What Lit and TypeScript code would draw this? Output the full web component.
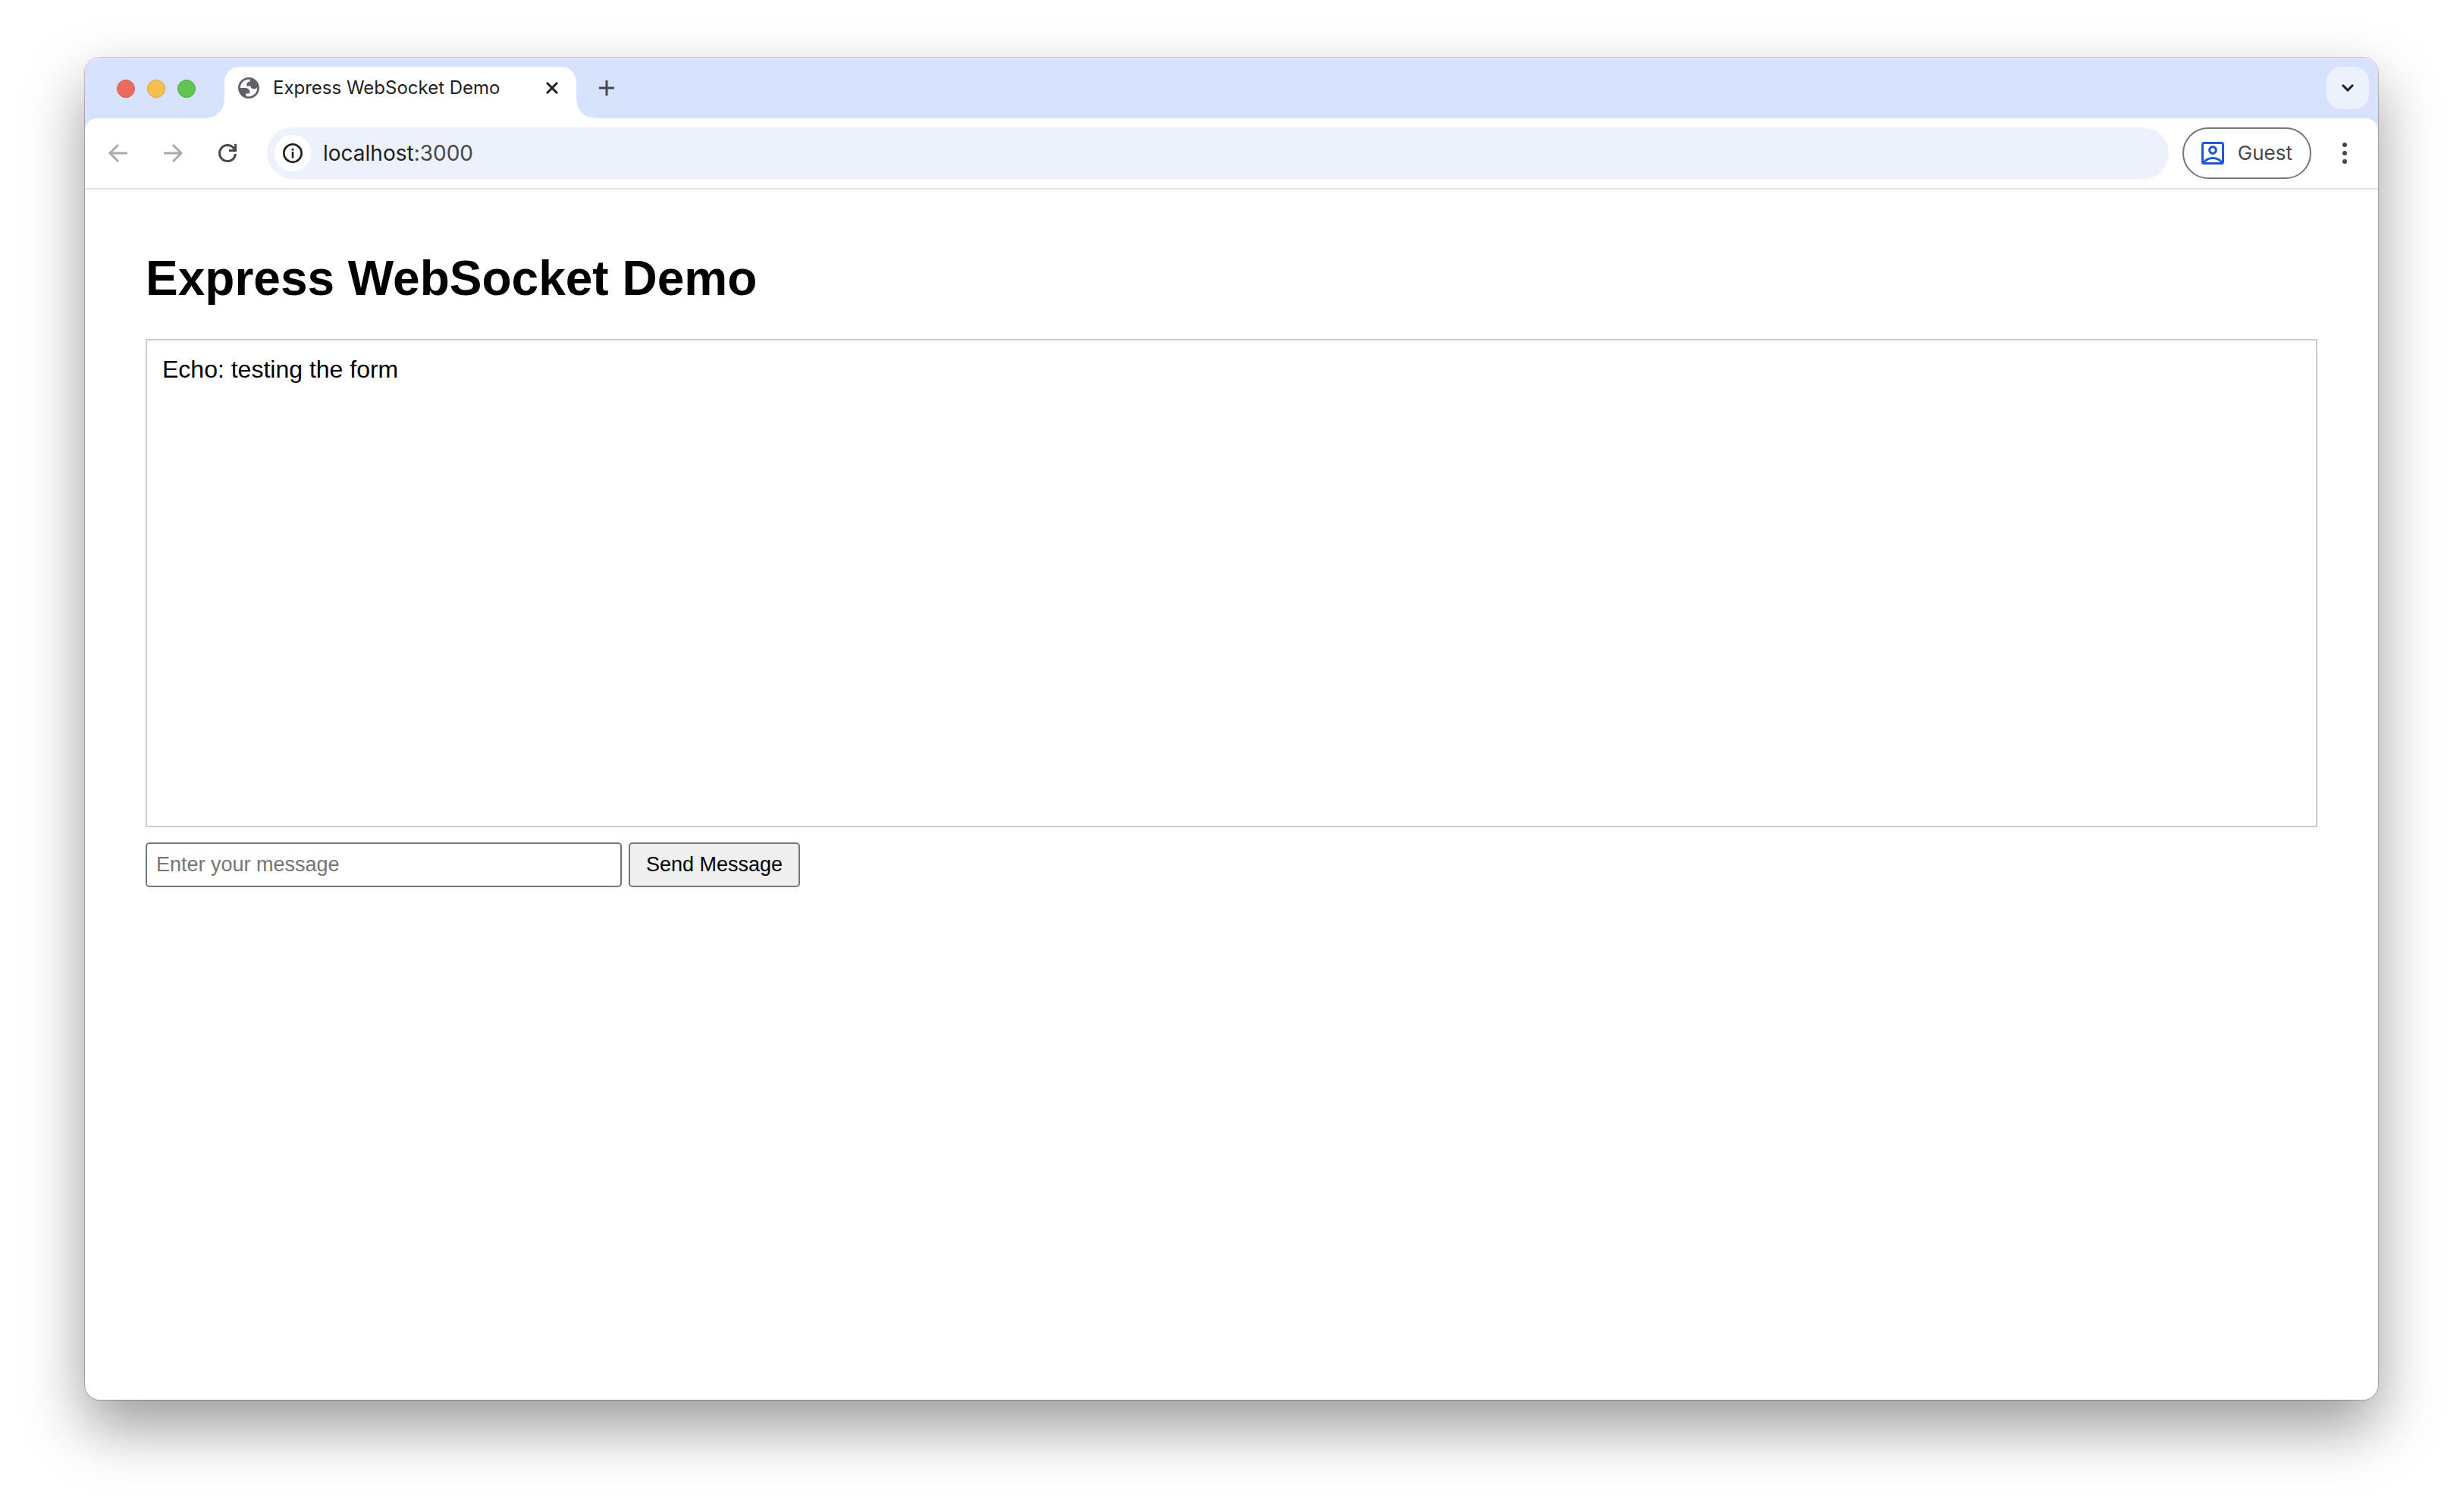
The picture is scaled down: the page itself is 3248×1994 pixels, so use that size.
import { LitElement, html, css } from "lit";
import { customElement, state } from "lit/decorators.js";

@customElement("browser-tab-strip")
class BrowserTabStrip extends LitElement {
  static styles = css`
    :host {
      display: block;
      background: #d6e1fb;
      font-family: Inter, "Liberation Sans", sans-serif;
    }
    .strip {
      display: flex;
      align-items: flex-start;
      height: 80px;
      padding: 12px 12px 0 42px;
      box-sizing: border-box;
      border-radius: 20px 20px 0 0;
      box-shadow: inset 0 1px 0 rgba(255, 255, 255, 0.6);
    }
    button {
      border: 0;
      padding: 0;
      background: none;
      display: grid;
      place-items: center;
      color: #474747;
    }
    .lights {
      display: flex;
      gap: 16px;
      padding-top: 17px;
      margin-right: 38px;
    }
    .light {
      width: 24px;
      height: 24px;
      border-radius: 50%;
      border: 1px solid;
      box-sizing: border-box;
    }
    .close {
      background: #ec6a5e;
      border-color: #d5554b;
    }
    .minimize {
      background: #f4bf4f;
      border-color: #d8a440;
    }
    .zoom {
      background: #61c554;
      border-color: #52a943;
    }
    .tab {
      display: flex;
      align-items: center;
      width: 464px;
      height: 56px;
      padding: 0 20px 0 18px;
      box-sizing: border-box;
      position: relative;
      background: #fff;
      border-radius: 20px 20px 0 0;
      color: #1f1f1f;
      font-size: 24px;
      line-height: 32px;
      margin-right: 28px;
    }
    .tab::before,
    .tab::after {
      content: "";
      position: absolute;
      top: 44px;
      width: 24px;
      height: 24px;
    }
    .tab::before {
      right: 100%;
      background: radial-gradient(circle at 0 0, transparent 23px, #fff 24px);
    }
    .tab::after {
      left: 100%;
      background: radial-gradient(circle at 100% 0, transparent 23px, #fff 24px);
    }
    .base {
      position: absolute;
      left: 0;
      right: 0;
      top: 50px;
      height: 18px;
      background: #fff;
    }
    .title {
      flex: 1;
      margin-left: 18px;
      white-space: nowrap;
    }
    .tab button {
      width: 24px;
      height: 24px;
      color: #1f1f1f;
    }
    .new {
      width: 24px;
      height: 56px;
    }
    .search {
      margin-left: auto;
      width: 56px;
      height: 56px;
      border-radius: 20px;
      background: #ebf2fc;
      color: #1f1f1f;
    }
    svg {
      display: block;
    }
  `;

  render() {
    return html`
      <div class="strip">
        <div class="lights">
          <button class="light close" aria-label="Close window"></button>
          <button class="light minimize" aria-label="Minimize window"></button>
          <button class="light zoom" aria-label="Zoom window"></button>
        </div>
        <div class="tab">
          <span class="base"></span>
          <svg width="28" height="28" viewBox="2 2 20 20" fill="#5f6368">
            <path
              fill-rule="evenodd"
              d="M12 2C6.480 2 2 6.480 2 12s4.480 10 10 10 10-4.480 10-10S17.520 2 12 2zM4 12h4.400c3.407.022 4.922 1.730 4.543 5.127H9.488v2.470a8.004 8.004 0 0 0 10.498-8.083C19.327 12.504 18.332 13 17 13c-2.137 0-3.206-.916-3.206-2.750h-3.748c-.274-2.728.683-4.092 2.870-4.092 0-.975.327-1.597.811-1.970A8.004 8.004 0 0 0 4 12z"
            />
          </svg>
          <span class="title">Express WebSocket Demo</span>
          <button aria-label="Close tab">
            <svg width="16" height="16" viewBox="0 0 16 16" fill="none" stroke="currentColor" stroke-width="3">
              <path d="M1 1l14 14M15 1L1 15" />
            </svg>
          </button>
        </div>
        <button class="new" aria-label="New tab">
          <svg width="20" height="20" viewBox="0 0 20 20" fill="none" stroke="currentColor" stroke-width="3">
            <path d="M10 0v20M0 10h20" />
          </svg>
        </button>
        <button class="search" aria-label="Search tabs">
          <svg width="16" height="10" viewBox="0 0 16 10" fill="none" stroke="currentColor" stroke-width="3">
            <path d="M1 1l7 7 7-7" />
          </svg>
        </button>
      </div>
    `;
  }
}

@customElement("browser-toolbar")
class BrowserToolbar extends LitElement {
  static styles = css`
    :host {
      display: block;
      background: #d6e1fb;
      font-family: Inter, "Liberation Sans", sans-serif;
    }
    .bar {
      display: flex;
      align-items: center;
      height: 94px;
      padding: 0 30px;
      box-sizing: border-box;
      background: #fff;
      border-bottom: 2px solid #e1e3e1;
      border-radius: 16px 16px 0 0;
    }
    button {
      border: 0;
      padding: 0;
      background: none;
      display: grid;
      place-items: center;
      font: inherit;
      color: #474747;
    }
    svg {
      display: block;
    }
    .nav {
      display: flex;
      gap: 44px;
      margin-right: 38px;
    }
    .nav button {
      width: 28px;
      height: 28px;
    }
    .nav button:disabled {
      color: #ababab;
    }
    .address {
      flex: 1;
      display: flex;
      align-items: center;
      gap: 16px;
      height: 68px;
      padding: 0 10px;
      box-sizing: border-box;
      border-radius: 34px;
      background: #edf2fa;
    }
    .info {
      width: 48px;
      height: 48px;
      border-radius: 50%;
      background: #fff;
      color: #1f1f1f;
    }
    .url {
      font-size: 28px;
      line-height: 36px;
      color: #474747;
      text-decoration: none;
    }
    .host {
      color: #1f1f1f;
    }
    .guest {
      display: flex;
      align-items: center;
      gap: 18px;
      height: 68px;
      padding: 0 23px;
      margin: 0 30px 0 18px;
      border: 2px solid #747775;
      border-radius: 34px;
      font-size: 26px;
      line-height: 32px;
      box-sizing: border-box;
    }
    .menu {
      width: 28px;
      height: 28px;
    }
  `;

  render() {
    return html`
      <div class="bar">
        <div class="nav">
          <button disabled aria-label="Back">
            <svg width="28" height="28" viewBox="0 0 28 28" fill="none" stroke="currentColor" stroke-width="3">
              <path d="M26 14H4M14 3L3 14l11 11" />
            </svg>
          </button>
          <button disabled aria-label="Forward">
            <svg width="28" height="28" viewBox="0 0 28 28" fill="none" stroke="currentColor" stroke-width="3">
              <path d="M2 14h22M14 3l11 11-11 11" />
            </svg>
          </button>
          <button aria-label="Reload">
            <svg width="28" height="28" viewBox="0 0 28 28" fill="none" stroke="currentColor" stroke-width="3">
              <path d="M24.500 15A10.500 10.500 0 1 1 22 7.200L24 9.500M24.500 2v8.500H16" />
            </svg>
          </button>
        </div>
        <div class="address">
          <button class="info" aria-label="View site information">
            <svg width="28" height="28" viewBox="0 0 28 28" fill="none" stroke="currentColor">
              <circle cx="14" cy="14" r="11.700" stroke-width="2.600" />
              <path d="M14 12v8.500M14 7.800v2.600" stroke-width="2.600" />
            </svg>
          </button>
          <a class="url" href="http://localhost:3000"><span class="host">localhost</span>:3000</a>
        </div>
        <button class="guest">
          <svg width="30" height="30" viewBox="0 0 30 30" fill="none" stroke="#2557cf" stroke-width="3">
            <rect x="1.500" y="1.500" width="27" height="27" rx="2" />
            <circle cx="15" cy="11" r="4.300" stroke-width="3.200" />
            <path d="M3 27c3-3.600 7-5.500 12-5.500s9 1.900 12 5.500" />
          </svg>
          <span>Guest</span>
        </button>
        <button class="menu" aria-label="Menu">
          <svg width="28" height="28" viewBox="0 0 28 28" fill="currentColor">
            <circle cx="14" cy="3" r="3" />
            <circle cx="14" cy="14" r="3" />
            <circle cx="14" cy="25" r="3" />
          </svg>
        </button>
      </div>
    `;
  }
}

@customElement("socket-demo")
class SocketDemo extends LitElement {
  static styles = css`
    :host {
      display: block;
      padding: 80px;
      color: #000;
      font-family: Arial, "Liberation Sans", sans-serif;
      font-size: 32px;
      line-height: 36px;
    }
    .heading {
      margin: 0 0 43px;
      font-size: 64px;
      line-height: 74px;
    }
    .messages {
      height: 600px;
      padding: 20px;
      margin-bottom: 20px;
      border: 2px solid #ccc;
      overflow-y: auto;
    }
    .form {
      display: flex;
      gap: 9px;
    }
    .field,
    .send {
      height: 59px;
      box-sizing: border-box;
      border: 2px solid #767676;
      border-radius: 5px;
      font-family: inherit;
      font-size: 27px;
    }
    .field {
      width: 628px;
      padding: 0 12px;
      background: #fff;
      outline: none;
    }
    .field::placeholder {
      color: #757575;
    }
    .send {
      padding: 0 21px;
      background: #efefef;
      color: #000;
    }
  `;

  @state() private messages: string[] = ["Echo: testing the form"];

  private send(event: Event) {
    event.preventDefault();
    const field = this.renderRoot.querySelector("input") as HTMLInputElement;
    if (!field.value) return;
    this.messages = [...this.messages, `Echo: ${field.value}`];
    field.value = "";
  }

  render() {
    return html`
      <h1 class="heading">Express WebSocket Demo</h1>
      <div class="messages" role="log">${this.messages.map((text) => html`<div>${text}</div>`)}</div>
      <form class="form" @submit=${this.send}>
        <input class="field" type="text" placeholder="Enter your message" aria-label="Enter your message" />
        <button class="send">Send Message</button>
      </form>
    `;
  }
}

@customElement("app-root")
export class AppRoot extends LitElement {
  static styles = css`
    :host {
      display: flex;
      min-height: 100vh;
      box-sizing: border-box;
      padding: 76px 112px 148px;
      background: #fff;
    }
    .window {
      flex: 1;
      border-radius: 20px;
      background: #fff;
      box-shadow:
        0 0 0 1px rgba(0, 0, 0, 0.22),
        0 36px 80px rgba(0, 0, 0, 0.4);
    }
    .chrome {
      overflow: hidden;
      border-radius: 20px 20px 0 0;
    }
  `;

  render() {
    return html`
      <main class="window">
        <div class="chrome">
          <browser-tab-strip></browser-tab-strip>
          <browser-toolbar></browser-toolbar>
        </div>
        <socket-demo></socket-demo>
      </main>
    `;
  }
}
